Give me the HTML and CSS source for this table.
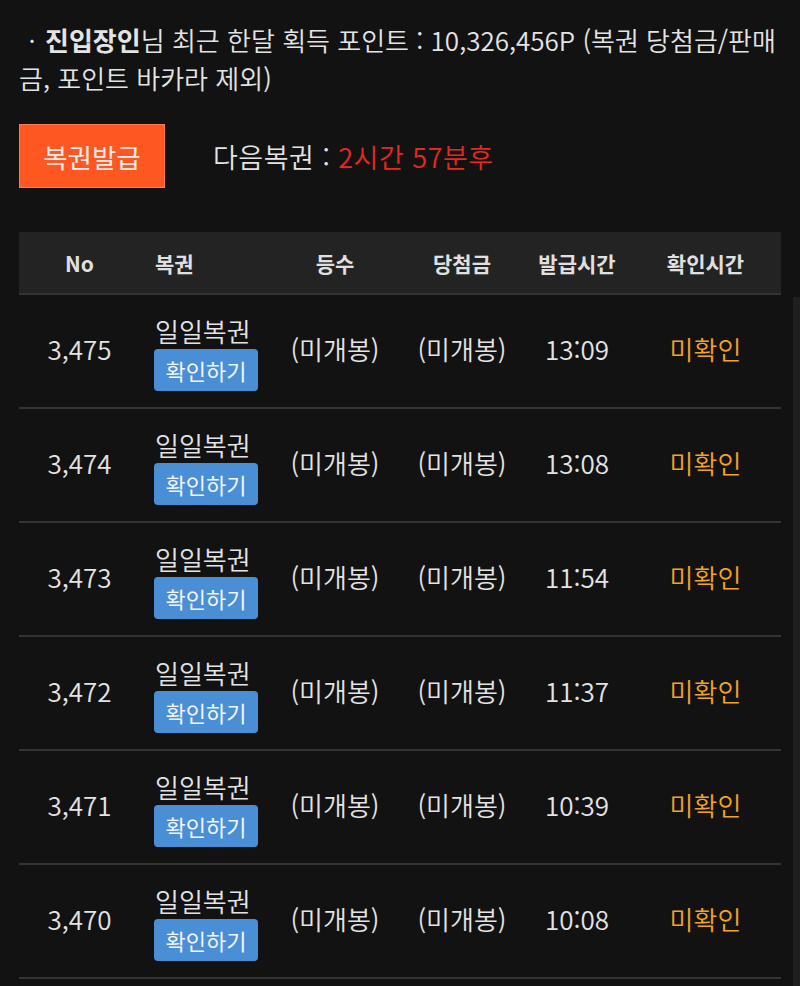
FILE: index.html
```html
<!DOCTYPE html>
<html lang="ko">
<head>
<meta charset="utf-8">
<link rel="stylesheet" href="styles.css">
</head>
<body>
<div class="page">
  <p class="info"><span class="dot">·</span><b>진입장인</b>님 최근 한달 획득 포인트 : 10,326,456P (복권 당첨금/판매<br>금, 포인트 바카라 제외)</p>
  <div class="issue">
    <button class="issue-btn">복권발급</button>
    <div class="next">다음복권 : <span class="red">2시간 57분후</span></div>
  </div>
  <div class="table">
    <div class="thead">
      <div class="c c1">No</div>
      <div class="c c2">복권</div>
      <div class="c c3">등수</div>
      <div class="c c4">당첨금</div>
      <div class="c c5">발급시간</div>
      <div class="c c6">확인시간</div>
    </div>
    <div class="row">
      <div class="c c1">3,475</div>
      <div class="c c2"><span class="name">일일복권</span><span class="chk">확인하기</span></div>
      <div class="c c3">(미개봉)</div>
      <div class="c c4">(미개봉)</div>
      <div class="c c5">13:09</div>
      <div class="c c6 gold">미확인</div>
    </div>
    <div class="row">
      <div class="c c1">3,474</div>
      <div class="c c2"><span class="name">일일복권</span><span class="chk">확인하기</span></div>
      <div class="c c3">(미개봉)</div>
      <div class="c c4">(미개봉)</div>
      <div class="c c5">13:08</div>
      <div class="c c6 gold">미확인</div>
    </div>
    <div class="row">
      <div class="c c1">3,473</div>
      <div class="c c2"><span class="name">일일복권</span><span class="chk">확인하기</span></div>
      <div class="c c3">(미개봉)</div>
      <div class="c c4">(미개봉)</div>
      <div class="c c5">11:54</div>
      <div class="c c6 gold">미확인</div>
    </div>
    <div class="row">
      <div class="c c1">3,472</div>
      <div class="c c2"><span class="name">일일복권</span><span class="chk">확인하기</span></div>
      <div class="c c3">(미개봉)</div>
      <div class="c c4">(미개봉)</div>
      <div class="c c5">11:37</div>
      <div class="c c6 gold">미확인</div>
    </div>
    <div class="row">
      <div class="c c1">3,471</div>
      <div class="c c2"><span class="name">일일복권</span><span class="chk">확인하기</span></div>
      <div class="c c3">(미개봉)</div>
      <div class="c c4">(미개봉)</div>
      <div class="c c5">10:39</div>
      <div class="c c6 gold">미확인</div>
    </div>
    <div class="row">
      <div class="c c1">3,470</div>
      <div class="c c2"><span class="name">일일복권</span><span class="chk">확인하기</span></div>
      <div class="c c3">(미개봉)</div>
      <div class="c c4">(미개봉)</div>
      <div class="c c5">10:08</div>
      <div class="c c6 gold">미확인</div>
    </div>
  </div>
</div>
<div class="scrollbar"></div>
</body>
</html>
```

FILE: styles.css
```css
html, body {
  margin: 0;
  padding: 0;
  background: #121212;
}
body {
  font-family: "Noto Sans CJK KR", "Noto Sans", sans-serif;
  color: #e4e4e4;
  overflow: hidden;
  height: 986px;
  position: relative;
}
.page {
  padding: 21px 19px 0 19px;
}
.info {
  margin: 0;
  font-size: 26px;
  line-height: 38px;
  letter-spacing: 0;
  white-space: nowrap;
  font-weight: 350;
}
.info .dot {
  display: inline-block;
  width: 26px;
  text-align: center;
}
.info b {
  font-weight: 700;
}
.issue {
  display: flex;
  align-items: center;
  margin-top: 27px;
  height: 64px;
}
.issue-btn {
  width: 146px;
  height: 64px;
  background: #ff5722;
  border: 1px solid #ff7a4f;
  color: #f4ece8;
  font-family: inherit;
  font-size: 26.5px;
  font-weight: 400;
  padding: 0;
  margin: 0;
}
.next {
  margin-left: 48px;
  font-size: 27px;
  letter-spacing: 0.5px;
  font-weight: 350;
}
.red {
  color: #e8281e;
}
.table {
  margin-top: 44px;
  width: 762px;
}
.thead, .row {
  display: grid;
  grid-template-columns: 121px 130px 130px 124px 106px 151px;
  align-items: center;
}
.thead {
  height: 61px;
  background: #232323;
  border-bottom: 2px solid #333333;
  font-size: 21px;
  font-weight: 700;
  color: #e0e0e0;
}
.row {
  height: 112px;
  border-bottom: 2px solid #333333;
  font-size: 26px;
  font-weight: 350;
}
.c {
  text-align: center;
}
.row .c {
  padding-bottom: 5px;
}
.thead .c2 {
  text-align: left;
  padding-left: 15px;
}
.row .c2 {
  display: flex;
  flex-direction: column;
  align-items: flex-start;
  padding-left: 14px;
  padding-top: 4px;
  padding-bottom: 0;
}
.name {
  font-size: 26px;
  line-height: 30px;
  padding-left: 1px;
}
.chk {
  margin-top: 3px;
  width: 104px;
  height: 42px;
  line-height: 42px;
  text-align: center;
  background: #4a8fd6;
  border-radius: 4px;
  font-size: 22px;
  font-weight: 400;
  color: #f2f6fb;
}
.gold {
  color: #f3a325;
}
.scrollbar {
  position: absolute;
  right: 0;
  top: 297px;
  width: 7px;
  bottom: 0;
  background: #1f1f1f;
}
```
